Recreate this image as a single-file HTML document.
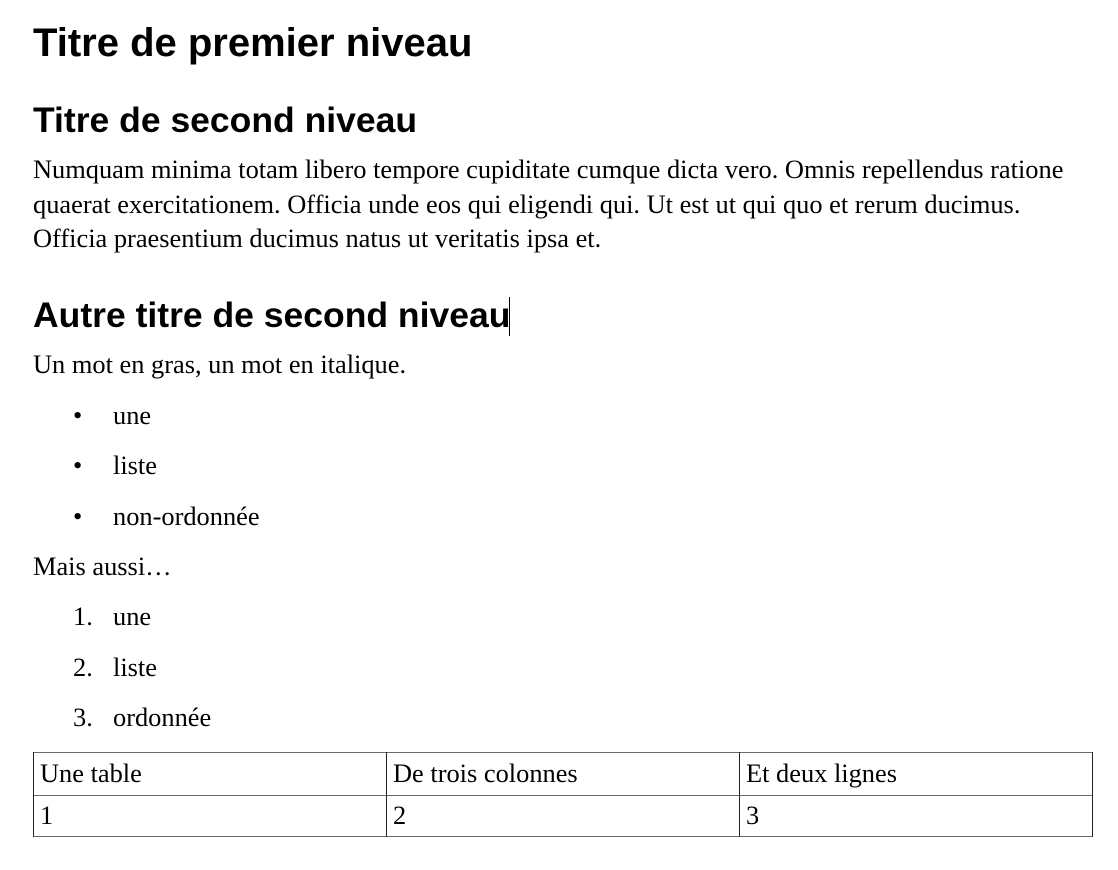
<!DOCTYPE html>
<html><head><meta charset="utf-8"><style>
html,body{margin:0;padding:0;background:#fff;width:1118px;height:870px;overflow:hidden;position:relative;color:#000}
.s{position:absolute;font-family:"Liberation Serif",serif;font-size:26.4px;line-height:26px;white-space:nowrap}
.h{position:absolute;font-family:"Liberation Sans",sans-serif;font-weight:bold;white-space:nowrap}
.hl{position:absolute;background:#6a6a6a;height:1px;left:33px;width:1060px}
.vl{position:absolute;background:#222;width:1px;top:752px;height:85px}
</style></head><body>
<div class="h" style="left:33px;top:23px;font-size:40px;line-height:40px">Titre de premier niveau</div>
<div class="h" style="left:33px;top:103px;font-size:35.5px;line-height:35px">Titre de second niveau</div>
<div class="s" style="left:33px;top:156px">Numquam minima totam libero tempore cupiditate cumque dicta vero. Omnis repellendus ratione</div>
<div class="s" style="left:33px;top:190.5px">quaerat exercitationem. Officia unde eos qui eligendi qui. Ut est ut qui quo et rerum ducimus.</div>
<div class="s" style="left:33px;top:224.5px">Officia praesentium ducimus natus ut veritatis ipsa et.</div>
<div class="h" style="left:33px;top:298px;font-size:35.5px;line-height:35px">Autre titre de second niveau</div>
<div style="position:absolute;left:509px;top:297px;width:1px;height:39px;background:#000"></div>
<div class="s" style="left:33px;top:351px">Un mot en gras, un mot en italique.</div>
<div class="s" style="left:73px;top:402px">•</div><div class="s" style="left:113px;top:402px">une</div>
<div class="s" style="left:73px;top:452px">•</div><div class="s" style="left:113px;top:452px">liste</div>
<div class="s" style="left:73px;top:502.5px">•</div><div class="s" style="left:113px;top:502.5px">non-ordonnée</div>
<div class="s" style="left:33px;top:553px">Mais aussi…</div>
<div class="s" style="left:73px;top:603px">1.</div><div class="s" style="left:113px;top:603px">une</div>
<div class="s" style="left:73px;top:653.5px">2.</div><div class="s" style="left:113px;top:653.5px">liste</div>
<div class="s" style="left:73px;top:703.5px">3.</div><div class="s" style="left:113px;top:703.5px">ordonnée</div>
<div class="hl" style="top:752px"></div>
<div class="hl" style="top:795px"></div>
<div class="hl" style="top:836px"></div>
<div class="vl" style="left:33px"></div>
<div class="vl" style="left:386px"></div>
<div class="vl" style="left:739px"></div>
<div class="vl" style="left:1092px"></div>
<div class="s" style="left:40px;top:760px">Une table</div>
<div class="s" style="left:393px;top:760px">De trois colonnes</div>
<div class="s" style="left:746px;top:760px">Et deux lignes</div>
<div class="s" style="left:40px;top:802px">1</div>
<div class="s" style="left:393px;top:802px">2</div>
<div class="s" style="left:746px;top:802px">3</div>
</body></html>
